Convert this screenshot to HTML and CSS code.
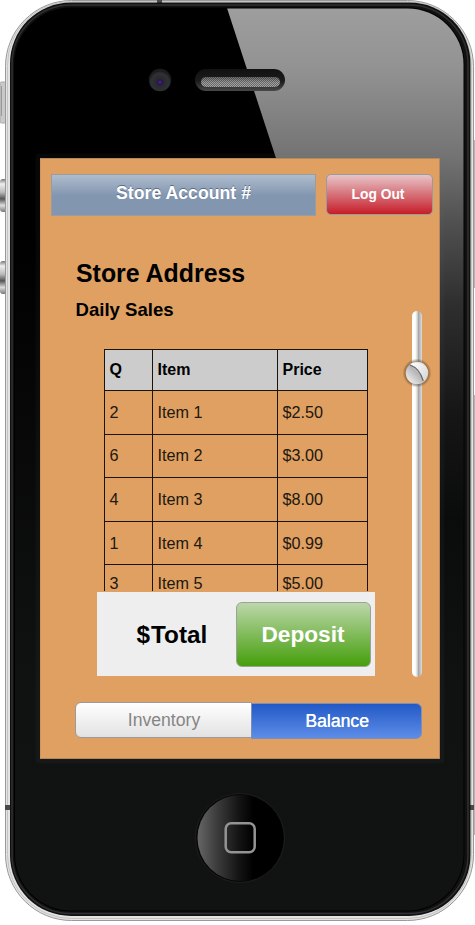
FILE: index.html
```
<!DOCTYPE html>
<html lang="en">
<head>
<meta charset="utf-8">
<title>Store Account</title>
<link rel="stylesheet" href="styles.css">
</head>
<body>
<div class="phone">
  <svg class="phone-body" width="475" height="925" viewBox="0 0 475 925" aria-hidden="true">
    <defs>
      <linearGradient id="glass" x1="0" y1="0" x2="0" y2="1">
        <stop offset="0" stop-color="#000"/><stop offset=".25" stop-color="#000"/><stop offset=".75" stop-color="#101211"/><stop offset="1" stop-color="#111312"/>
      </linearGradient>
      <linearGradient id="glare" gradientUnits="userSpaceOnUse" x1="0" y1="8" x2="0" y2="520">
        <stop offset="0" stop-color="#9e9e9e"/><stop offset=".12" stop-color="#929292"/><stop offset=".29" stop-color="#737373"/><stop offset=".42" stop-color="#505050"/><stop offset=".58" stop-color="#2e2e2e"/><stop offset=".8" stop-color="#141514"/><stop offset="1" stop-color="#0a0b0b"/>
      </linearGradient>
      <linearGradient id="home" x1="0" y1="0" x2="1" y2="0">
        <stop offset="0" stop-color="#666"/><stop offset=".22" stop-color="#3d3d3d"/><stop offset=".48" stop-color="#141414"/><stop offset=".65" stop-color="#000"/>
      </linearGradient>
      <linearGradient id="key" x1="0" y1="0" x2="0" y2="1">
        <stop offset="0" stop-color="#777"/><stop offset=".15" stop-color="#eee"/><stop offset=".4" stop-color="#bbb"/><stop offset=".6" stop-color="#555"/><stop offset=".8" stop-color="#ddd"/><stop offset="1" stop-color="#777"/>
      </linearGradient>
      <linearGradient id="grille" x1="0" y1="0" x2="0" y2="1">
        <stop offset="0" stop-color="#111"/><stop offset=".55" stop-color="#1c1c1c"/><stop offset="1" stop-color="#484848"/>
      </linearGradient>
      <linearGradient id="meshshade" x1="0" y1="0" x2="0" y2="1">
        <stop offset="0" stop-color="#000" stop-opacity=".35"/><stop offset=".6" stop-color="#000" stop-opacity="0"/>
      </linearGradient>
      <radialGradient id="lens" cy=".6">
        <stop offset="0" stop-color="#5528b0"/><stop offset=".18" stop-color="#291350"/><stop offset=".36" stop-color="#292a2e"/><stop offset=".8" stop-color="#303134"/><stop offset="1" stop-color="#1c1c1e"/>
      </radialGradient>
      <pattern id="mesh" width="2" height="2" patternUnits="userSpaceOnUse">
        <rect width="2" height="2" fill="#686868"/><rect width="1" height="1" fill="#a2a2a2"/><rect x="1" y="1" width="1" height="1" fill="#a2a2a2"/>
      </pattern>
      <clipPath id="face"><rect x="15" y="8.500" width="448.500" height="902" rx="56"/></clipPath>
    </defs>
    <rect x="0" y="82" width="8" height="41" rx="1.500" fill="#c9c9c9" stroke="#aaa"/>
    <path d="M1.500 86v30" stroke="#999"/>
    <rect x="0" y="179" width="9" height="33" rx="3" fill="url(#key)"/>
    <rect x="0" y="261" width="9" height="33" rx="3" fill="url(#key)"/>
    <path d="M474.500 140V288M474.500 395V835" stroke="#b5b5b5"/>
    <rect x="5.500" y=".5" width="468" height="920" rx="66" fill="#e3e3e2" stroke="#999"/>
    <rect x="7.500" y="1.500" width="464" height="917" rx="64" fill="none" stroke="#c4c4c4"/>
    <path d="M157 0h5v4h-5zM5 805h6v5H5zM469 805h5v5h-5z" fill="#4b4846"/>
    <rect x="10" y="2.500" width="460.500" height="913.500" rx="61" fill="#111"/>
    <rect x="12" y="5" width="456" height="908.500" rx="59" fill="none" stroke="#303030" stroke-width="1.500"/>
    <rect x="14" y="7.500" width="450.500" height="904" rx="57" fill="#000"/>
    <g clip-path="url(#face)">
      <rect x="15" y="8" width="449" height="903" fill="url(#glass)"/>
      <path d="M227 8H464V520H394z" fill="url(#glare)"/>
      <rect x="35.500" y="153.500" width="409" height="610" rx="4" fill="#777" fill-opacity=".06"/>
    </g>
    <circle cx="160" cy="80" r="11.200" fill="url(#lens)"/>
    <rect x="195" y="69" width="90" height="22" rx="11" fill="url(#grille)"/>
    <rect x="201" y="77" width="79" height="10" rx="5" fill="url(#mesh)"/>
    <rect x="201" y="77" width="79" height="10" rx="5" fill="url(#meshshade)"/>
    <circle cx="240" cy="838" r="44.500" fill="#070707" stroke="#222" stroke-width=".8"/>
    <circle cx="240.500" cy="838" r="43" fill="url(#home)"/>
    <rect x="225.700" y="823.200" width="29" height="29" rx="5.500" fill="none" stroke="#949494" stroke-width="2.500"/>
  </svg>
  <main class="screen">
    <header class="top">
      <div class="account">Store Account #</div>
      <button class="logout">Log Out</button>
    </header>
    <div class="content">
      <section class="sales">
        <h1>Store Address</h1>
        <h2>Daily Sales</h2>
        <div class="list">
          <table>
            <colgroup><col class="c-q"><col class="c-item"><col class="c-price"></colgroup>
            <thead><tr><th>Q</th><th>Item</th><th>Price</th></tr></thead>
            <tbody>
              <tr><td>2</td><td>Item 1</td><td>$2.50</td></tr>
              <tr><td>6</td><td>Item 2</td><td>$3.00</td></tr>
              <tr><td>4</td><td>Item 3</td><td>$8.00</td></tr>
              <tr><td>1</td><td>Item 4</td><td>$0.99</td></tr>
              <tr class="last"><td>3</td><td>Item 5</td><td>$5.00</td></tr>
            </tbody>
          </table>
        </div>
        <div class="total"><strong><span class="cur">$</span>Total</strong><button class="deposit">Deposit</button></div>
      </section>
      <div class="slider">
        <svg class="knob" width="30" height="30" viewBox="0 0 30 30" aria-hidden="true">
          <defs>
            <linearGradient id="ball" x1="0" y1="1" x2="1" y2="0"><stop offset="0" stop-color="#fff"/><stop offset=".5" stop-color="#b5b5b5"/><stop offset="1" stop-color="#fff"/></linearGradient>
            <linearGradient id="shine" x1="0" y1="0" x2="1" y2="1"><stop offset="0" stop-color="#fff"/><stop offset="1" stop-color="#d4d4d4"/></linearGradient>
            <radialGradient id="shade"><stop offset=".7" stop-color="#4a3018" stop-opacity=".7"/><stop offset="1" stop-color="#4a3018" stop-opacity="0"/></radialGradient>
          </defs>
          <circle cx="15" cy="15" r="14.500" fill="url(#shade)"/>
          <circle cx="15" cy="15" r="11.300" fill="url(#ball)"/>
          <path d="M8 6.200A11.300 11.300 0 0 1 21.500 24.200C20 17 15 9 8 6.200z" fill="url(#shine)"/>
          <path d="M8 7C14 9 19 15 21.300 23" fill="none" stroke="#666" stroke-width="1.200"/>
        </svg>
      </div>
    </div>
    <nav class="tabs"><button class="tab">Inventory</button><button class="tab active">Balance</button></nav>
  </main>
</div>
</body>
</html>
```
FILE: styles.css
```
* { box-sizing: border-box; }
body { margin: 0; background: #fff; font-family: "Liberation Sans", Arial, sans-serif; color: #000; overflow: hidden; }
button { font-family: inherit; padding: 0; margin: 0; }
h1, h2 { margin: 0; font-weight: bold; }
.phone { position: relative; width: 475px; height: 925px; padding: 158px 35px 0 40px; overflow: hidden; }
.phone-body { position: absolute; left: 0; top: 0; }
.screen { position: relative; display: flex; flex-direction: column; width: 400px; height: 601px; background: #dfa062; border: 1px solid #b28860; border-left-color: #d3955b; }
.top { display: flex; gap: 10px; padding: 15px 0 0 10px; }
.account { width: 265px; height: 41.500px; border: 1px solid #9b9c9e; background: linear-gradient(#afbccd, #8296b0 52%, #8296b0); color: #fff; font-size: 17.700px; font-weight: bold; line-height: 37px; text-align: center; text-shadow: 0 -1px 0 #5b6b85; }
.logout { width: 107px; height: 40.500px; padding-right: 3px; border: 1px solid #9a9a9e; border-radius: 5px; background: linear-gradient(#e7c4c8, #c61d29); color: #fff; font-size: 13.800px; font-weight: bold; }
.content { display: flex; justify-content: space-between; padding: 0 17.500px 0 35px; height: 462px; }
.sales { width: 300px; padding-top: 42px; }
.sales h1 { font-size: 24.900px; line-height: 30px; }
.sales h2 { font-size: 18.600px; line-height: 24px; margin: 10px 0 0 -.5px; }
.list { height: 243px; margin: 27px 0 0 27.500px; }
table { width: 263.500px; table-layout: fixed; border-collapse: collapse; font-size: 16.200px; line-height: 18px; }
.c-q { width: 48px; }
.c-item { width: 125px; }
.c-price { width: 90px; }
th, td { border: 1px solid #1b140d; padding: 0 5px; text-align: left; }
th { height: 41.500px; background: #ccc; font-size: 16px; }
td { height: 43.600px; padding-bottom: 1px; color: #21180f; }
.last td { height: 26.500px; padding-top: 11px; padding-bottom: 0; border-bottom: 0; line-height: 15px; vertical-align: top; }
.total { display: flex; align-items: center; justify-content: space-between; width: 278px; height: 84px; margin-left: 21px; padding: 1px 4.500px 0 39.500px; background: #eee; }
.total strong { padding-top: 1px; font-size: 24.300px; }
.cur { margin-right: 1px; }
.deposit { width: 135px; height: 65px; border: 1.500px solid #9da09b; border-radius: 6px; background: linear-gradient(#bcd7aa, #459f0b); color: #fff; font-size: 22.700px; font-weight: bold; }
.slider { position: relative; width: 10px; height: 366px; margin-top: 95.500px; border-radius: 5px; background: linear-gradient(90deg, #fff 0 32%, #eee6e0 42%, #ddd 50%, #a8a8a8 65%, #c5c5c5 85%, #ddd); }
.knob { position: absolute; left: -9.500px; top: 46.500px; }
.tabs { display: flex; padding: 24px 0 0 34px; }
.tab { width: 177px; height: 36px; padding: 1px 0 0 1px; border: 1px solid #9b9b9b; border-radius: 6px 0 0 6px; background: linear-gradient(#fff, #e2e2e2); color: #858585; font-size: 17.600px; }
.tab.active { width: 171px; margin: 1px 0 0 -1px; border-color: #7e8fb4; border-radius: 0 6px 6px 0; background: linear-gradient(#2259c6, #5e8de8); color: #fff; text-shadow: .4px 0 0 #fff; }
```
